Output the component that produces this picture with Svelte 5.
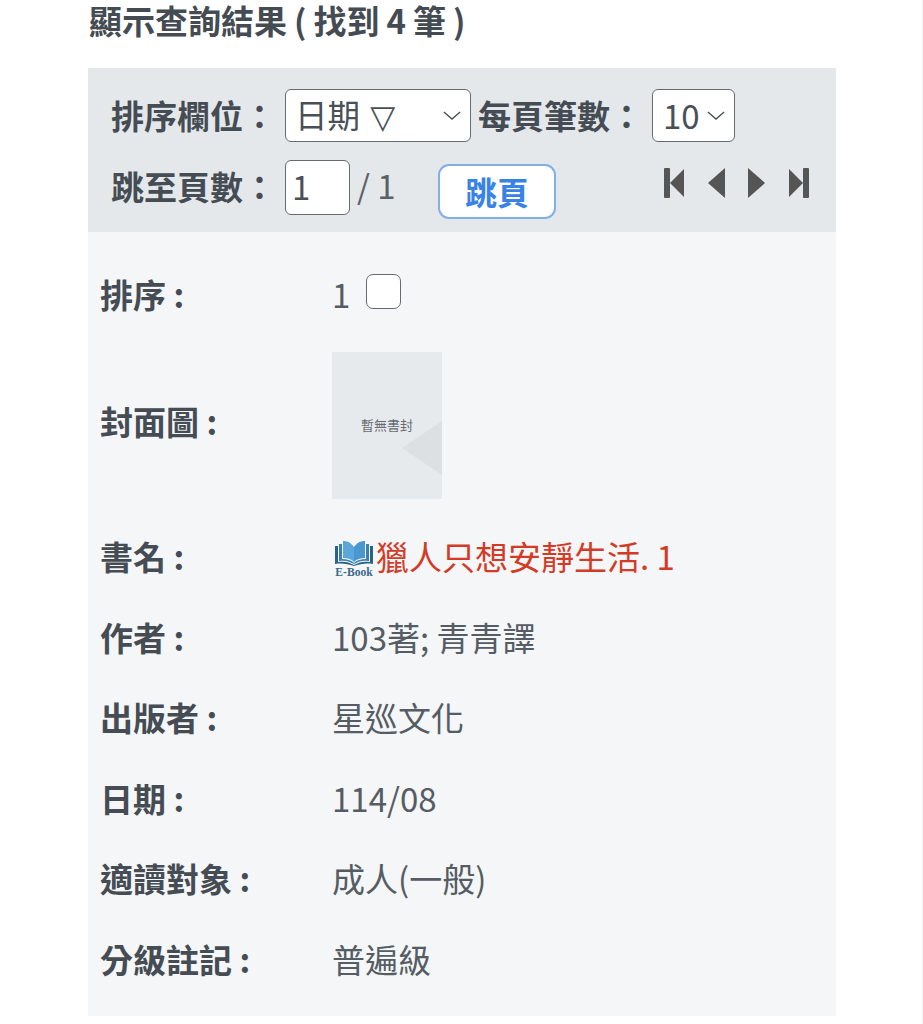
<script>
  const rows = [
    { label: '書名', value: '獵人只想安靜生活. 1', kind: 'title' },
    { label: '作者', value: '103著; 青青譯' },
    { label: '出版者', value: '星巡文化' },
    { label: '日期', value: '114/08' },
    { label: '適讀對象', value: '成人(一般)' },
    { label: '分級註記', value: '普遍級' }
  ];
</script>

<div class="page">
  <h2 class="heading">顯示查詢結果 ( 找到 4 筆 )</h2>

  <section class="panel">
    <div class="toolbar">
      <div class="tool-row first">
        <span class="tool-label">排序欄位：</span>
        <div class="select-wrap wide">
          <select class="select sort-select" aria-label="排序欄位"><option>日期 ▽</option></select>
          <svg class="chev" viewBox="0 0 20 10" aria-hidden="true"><path d="M1 1l9 8 9-8" /></svg>
        </div>
        <span class="tool-label per">每頁筆數：</span>
        <div class="select-wrap narrow">
          <select class="select" aria-label="每頁筆數"><option>10</option></select>
          <svg class="chev" viewBox="0 0 20 10" aria-hidden="true"><path d="M1 1l9 8 9-8" /></svg>
        </div>
      </div>
      <div class="tool-row second">
        <span class="tool-label up">跳至頁數：</span>
        <input class="page-input" value="1" aria-label="跳至頁數" />
        <span class="total">/ 1</span>
        <button class="jump">跳頁</button>
        <nav class="pager" aria-label="分頁">
          <svg width="20" height="30" viewBox="0 0 20 30"><rect width="6" height="30" rx="1" /><path d="M6 15L20 1v28z" /></svg>
          <svg width="17" height="30" viewBox="0 0 17 30"><path d="M0 15L17 0v30z" /></svg>
          <svg width="17" height="30" viewBox="0 0 17 30"><path d="M17 15L0 0v30z" /></svg>
          <svg width="20" height="30" viewBox="0 0 20 30"><rect x="14" width="6" height="30" rx="1" /><path d="M14 15L0 1v28z" /></svg>
        </nav>
      </div>
    </div>

    <dl class="details">
      <div class="row sort">
        <dt>排序 :</dt>
        <dd class="sort-value"><span>1</span><span class="check"></span></dd>
      </div>
      <div class="row cover-row">
        <dt>封面圖 :</dt>
        <dd>
          <div class="cover">
            <span>暫無書封</span>
            <i class="fold"></i>
          </div>
        </dd>
      </div>
      {#each rows as row}
        <div class="row">
          <dt>{row.label} :</dt>
          {#if row.kind === 'title'}
            <dd class="title-value">
              <svg class="ebook" viewBox="0 0 38 36" aria-hidden="true">
                <path d="M0 5h3v16c6-1 11 0 16 3 5-3 10-4 16-3V5h3v18c-7-1-13 0-19 2-6-2-12-3-19-2z" fill="#2d6288" />
                <path d="M4 3h3v15c5 0 9 1 12 4 3-3 7-4 12-4V3h3v17c-6-1-10 0-15 3-5-3-9-4-15-3z" fill="#3d80ad" />
                <path d="M8 0c5 0 8 2 11 6v15c-3-3-6-4-11-4z" fill="#5ba6dc" />
                <path d="M30 0c-5 0-8 2-11 6v15c3-3 6-4 11-4z" fill="#4a96cf" />
                <text x="19" y="34.5" text-anchor="middle" class="ebook-text">E-Book</text>
              </svg>
              <a href="#top" class="title-link">{row.value}</a>
            </dd>
          {:else}
            <dd>{row.value}</dd>
          {/if}
        </div>
      {/each}
    </dl>
  </section>
</div>

<style>
  :global(body) {
    margin: 0;
    background: #fff;
  }
  .page {
    box-sizing: border-box;
    width: 923px;
    height: 1024px;
    overflow: hidden;
    padding: 0 87px 0 88px;
    border-right: 1px solid #f2f2f2;
    font-family: "Noto Sans CJK TC", "Noto Sans", sans-serif;
    color: #495057;
    font-size: 33px;
  }
  .heading {
    margin: 0;
    height: 68px;
    padding-left: 1px;
    box-sizing: border-box;
    font-size: 33px;
    line-height: 40px;
    font-weight: 700;
    word-spacing: -0.5px;
    color: #444b52;
    white-space: nowrap;
  }
  .panel {
    width: 748px;
    height: 948px;
    background: #f4f6f8;
  }
  .toolbar {
    box-sizing: border-box;
    height: 164px;
    padding: 21px 27px 0 23px;
    background: #e4e8eb;
  }
  .tool-row {
    display: flex;
    align-items: center;
  }
  .tool-row.first {
    height: 53px;
  }
  .tool-row.second {
    margin-top: 18px;
    height: 55px;
  }
  .tool-label {
    font-weight: 700;
    width: 174px;
    flex: none;
    line-height: 1;
    color: #454c53;
    white-space: nowrap;
  }
  .tool-label.up {
    padding-bottom: 2px;
  }
  .tool-label.per {
    margin-left: 7px;
  }
  .select-wrap {
    position: relative;
    height: 53px;
    flex: none;
  }
  .select-wrap.wide { width: 186px; }
  .select-wrap.narrow { width: 83px; }
  .select {
    appearance: none;
    box-sizing: border-box;
    width: 100%;
    height: 100%;
    padding: 0 0 0 10px;
    border: 1.5px solid #666b70;
    border-radius: 6px;
    background: #fff;
    font: inherit;
    font-size: 33px;
    color: #495057;
    line-height: 1;
  }
  .sort-select {
    padding: 4px 0 0 9px;
    font-family: "DejaVu Sans", "Noto Sans CJK TC", sans-serif;
    font-size: 32.5px;
  }
  .chev {
    position: absolute;
    right: 10px;
    top: 22px;
    width: 18px;
    height: 9px;
    fill: none;
    stroke: #495057;
    stroke-width: 1.5;
  }
  .page-input {
    box-sizing: border-box;
    width: 65px;
    height: 55px;
    padding: 0 0 3px 6px;
    border: 1.5px solid #666b70;
    border-radius: 6px;
    background: #fff;
    font: inherit;
    font-size: 33px;
    color: #495057;
    flex: none;
  }
  .total {
    margin-left: 7px;
    padding-bottom: 6px;
    width: 81px;
    flex: none;
    color: #5a6268;
  }
  .jump {
    width: 118px;
    height: 55px;
    margin-top: 7px;
    border: 2px solid #7fb0e8;
    border-radius: 11px;
    background: #fff;
    color: #3a83e6;
    font: inherit;
    font-weight: 700;
    font-size: 32px;
    line-height: 1;
    padding: 0;
    flex: none;
  }
  .pager {
    margin-left: auto;
    display: flex;
    gap: 23.6px;
    align-items: center;
    margin-top: -10px;
  }
  .pager svg {
    fill: #555;
    display: block;
  }
  .details {
    margin: 0;
    padding: 0 0 0 12px;
  }
  .row {
    display: flex;
    align-items: center;
    height: 80.5px;
  }
  .row.sort {
    box-sizing: border-box;
    height: 120px;
    padding-top: 4px;
  }
  .row.cover-row {
    height: 147px;
    margin-bottom: 17.5px;
  }
  .cover-row dt {
    padding-bottom: 8px;
  }
  dt {
    width: 232px;
    flex: none;
    font-weight: 700;
    color: #454c53;
    line-height: 1;
  }
  dd {
    margin: 0;
    line-height: 1;
    color: #555c63;
  }
  .sort-value {
    display: flex;
    align-items: center;
    gap: 16px;
  }
  .check {
    display: block;
    box-sizing: border-box;
    width: 35px;
    height: 35px;
    border: 1.5px solid #666b70;
    border-radius: 7px;
    background: #fff;
    margin-top: -6px;
  }
  .cover {
    position: relative;
    overflow: hidden;
    width: 110px;
    height: 147px;
    background: #e7eaed;
    display: flex;
    align-items: center;
    justify-content: center;
  }
  .cover span {
    font-size: 13px;
    color: #666c72;
    line-height: 1;
    white-space: nowrap;
    margin-top: -2px;
  }
  .fold {
    position: absolute;
    right: 0;
    top: 69px;
    width: 0;
    height: 0;
    border-style: solid;
    border-width: 27px 40px 27px 0;
    border-color: transparent #dde0e3 transparent transparent;
  }
  .title-value {
    display: flex;
    align-items: center;
    margin-left: 3px;
  }
  .ebook {
    width: 38px;
    height: 36px;
    flex: none;
    margin-right: 3px;
    margin-top: 5px;
  }
  .ebook-text {
    font-family: "Liberation Serif", serif;
    font-size: 11.6px;
    font-weight: 700;
    fill: #3a6a8a;
  }
  .title-link {
    color: #d33b27;
    text-decoration: none;
  }
</style>
